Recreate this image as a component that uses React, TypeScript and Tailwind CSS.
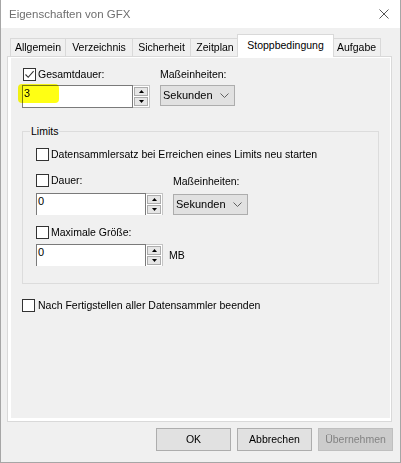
import React from 'react';

const tabs = [
  { label: 'Allgemein', w: 'w-[55px]' },
  { label: 'Verzeichnis', w: 'w-[67px]' },
  { label: 'Sicherheit', w: 'w-[58px]' },
  { label: 'Zeitplan', w: 'w-[49px]' },
  { label: 'Stoppbedingung', w: 'w-[97px]', active: true },
  { label: 'Aufgabe', w: 'w-[49px]', last: true },
];

const Check: React.FC<{ checked?: boolean }> = ({ checked }) => (
  <span className="w-[13px] h-[13px] shrink-0 border border-[#333333] bg-white flex items-center justify-center">
    {checked && (
      <svg width="11" height="11" viewBox="0 0 11 11">
        <path d="M1.5 5.5 L4.2 8.3 L9.6 2.2" fill="none" stroke="#333333" strokeWidth="1.1" />
      </svg>
    )}
  </span>
);

const Spinner: React.FC = () => (
  <div className="w-[17px] h-[23px] border-y border-r border-[#c4c4c4] bg-white p-[1px] flex flex-col gap-[1px]">
    <div className="flex-1 bg-[#e6e6e6] border border-[#acacac] flex items-center justify-center">
      <svg width="5" height="3" viewBox="0 0 5 3">
        <path d="M0 3 L2.5 0 L5 3Z" fill="#000" />
      </svg>
    </div>
    <div className="flex-1 bg-[#e6e6e6] border border-[#acacac] flex items-center justify-center">
      <svg width="5" height="3" viewBox="0 0 5 3">
        <path d="M0 0 L5 0 L2.5 3Z" fill="#000" />
      </svg>
    </div>
  </div>
);

const SpinBox: React.FC<{ value: string; wide?: boolean }> = ({ value, wide }) => (
  <div className="flex">
    <div
      className={`${wide ? 'w-[111px]' : 'w-[110px]'} h-[23px] border border-[#7a7a7a] bg-white pl-[1px] pt-[1px] text-[11px] leading-[13px]`}
    >
      {value}
    </div>
    <Spinner />
  </div>
);

const Select: React.FC = () => (
  <div className="w-[75px] h-[21px] bg-[#e1e1e1] border border-[#adadad] flex items-center justify-between pl-[2px] pr-[5px] text-[11px]">
    <span>Sekunden</span>
    <svg width="9" height="5" viewBox="0 0 9 5">
      <path d="M0.5 0.5 L4.5 4.5 L8.5 0.5" fill="none" stroke="#606060" />
    </svg>
  </div>
);

const Button: React.FC<{ label: string; disabled?: boolean }> = ({ label, disabled }) => (
  <div
    className={`w-[75px] h-[23px] border flex items-center justify-center ${
      disabled ? 'bg-[#cccccc] border-[#bfbfbf] text-[#838383]' : 'bg-[#e1e1e1] border-[#adadad]'
    }`}
  >
    {label}
  </div>
);

export default function App() {
  return (
    <div className="w-[401px] h-[463px] bg-[#f0f0f0] border-x border-b border-[#a6a6a6] flex flex-col font-[family-name:'Liberation_Sans',Arial,sans-serif] text-[10.5px] text-black leading-[13px]">
      {/* Title bar */}
      <div className="h-[28px] shrink-0 bg-white flex items-center justify-between pl-[8px] pr-[11px]">
        <span className="text-[11.5px] text-[#6f6f6f]">Eigenschaften von GFX</span>
        <svg width="10" height="10" viewBox="0 0 10 10">
          <path d="M0.5 0.5 L9.5 9.5 M9.5 0.5 L0.5 9.5" stroke="#555555" strokeWidth="1" />
        </svg>
      </div>

      {/* Tabs */}
      <div className="mt-[7px] pl-[9px] h-[21px] flex items-end">
        {tabs.map((t) =>
          t.active ? (
            <div
              key={t.label}
              className={`${t.w} relative z-10 -mx-[2px] -mb-[1px] h-[23px] bg-white border-x border-t border-[#d9d9d9] flex items-center justify-center pb-[1px]`}
            >
              {t.label}
            </div>
          ) : (
            <div
              key={t.label}
              className={`${t.w} h-[18px] bg-[#f0f0f0] border-t border-l border-[#d9d9d9] ${
                t.last ? 'border-r' : ''
              } flex items-center justify-center`}
            >
              {t.label}
            </div>
          )
        )}
      </div>

      {/* Panel */}
      <div className="ml-[6px] w-[385px] h-[366px] border border-[#d9d9d9] bg-white pl-[3px] pb-[3px] pt-[1px] pr-[1px]">
        <div className="h-full bg-[#f0f0f0] pl-[11px] pt-[10px] flex flex-col">
          <div className="flex gap-[10px]">
            <div className="flex flex-col gap-[4px]">
              <div className="h-[13px] flex items-center gap-[2px] ml-[1px]">
                <Check checked />
                <span>Gesamtdauer:</span>
              </div>
              <div className="relative">
                <SpinBox value="3" wide />
                <div className="absolute -left-[4px] -top-[1px] w-[41px] h-[19px] rounded-[4px] bg-[#ffff14] mix-blend-multiply" />
              </div>
            </div>
            <div className="flex flex-col gap-[4px]">
              <div className="h-[13px] flex items-center">Maßeinheiten:</div>
              <Select />
            </div>
          </div>

          {/* Limits group */}
          <div className="relative mt-[23px] w-[357px] h-[153px] border border-[#dcdcdc] pl-[13px] pt-[16px] flex flex-col">
            <span className="absolute left-[7px] -top-[7px] px-[1px] bg-[#f0f0f0]">Limits</span>
            <div className="h-[13px] flex items-center gap-[2px]">
              <Check />
              <span>Datensammlersatz bei Erreichen eines Limits neu starten</span>
            </div>

            <div className="mt-[13px] flex gap-[10px]">
              <div className="flex flex-col gap-[6px]">
                <div className="h-[13px] flex items-center gap-[2px]">
                  <Check />
                  <span>Dauer:</span>
                </div>
                <div className="h-[22px] overflow-hidden">
                  <SpinBox value="0" />
                </div>
              </div>
              <div className="pt-[1px] flex flex-col gap-[6px]">
                <div className="h-[13px] flex items-center">Maßeinheiten:</div>
                <Select />
              </div>
            </div>

            <div className="mt-[11px] h-[13px] flex items-center gap-[2px]">
              <Check />
              <span>Maximale Größe:</span>
            </div>
            <div className="mt-[5px] flex items-center gap-[6px]">
              <div className="h-[22px] overflow-hidden">
                <SpinBox value="0" />
              </div>
              <span>MB</span>
            </div>
          </div>

          <div className="mt-[15px] h-[13px] flex items-center gap-[3px]">
            <Check />
            <span>Nach Fertigstellen aller Datensammler beenden</span>
          </div>
        </div>
      </div>

      {/* Buttons */}
      <div className="mt-[6px] flex justify-end gap-[6px] pr-[7px]">
        <Button label="OK" />
        <Button label="Abbrechen" />
        <Button label="Übernehmen" disabled />
      </div>
    </div>
  );
}
